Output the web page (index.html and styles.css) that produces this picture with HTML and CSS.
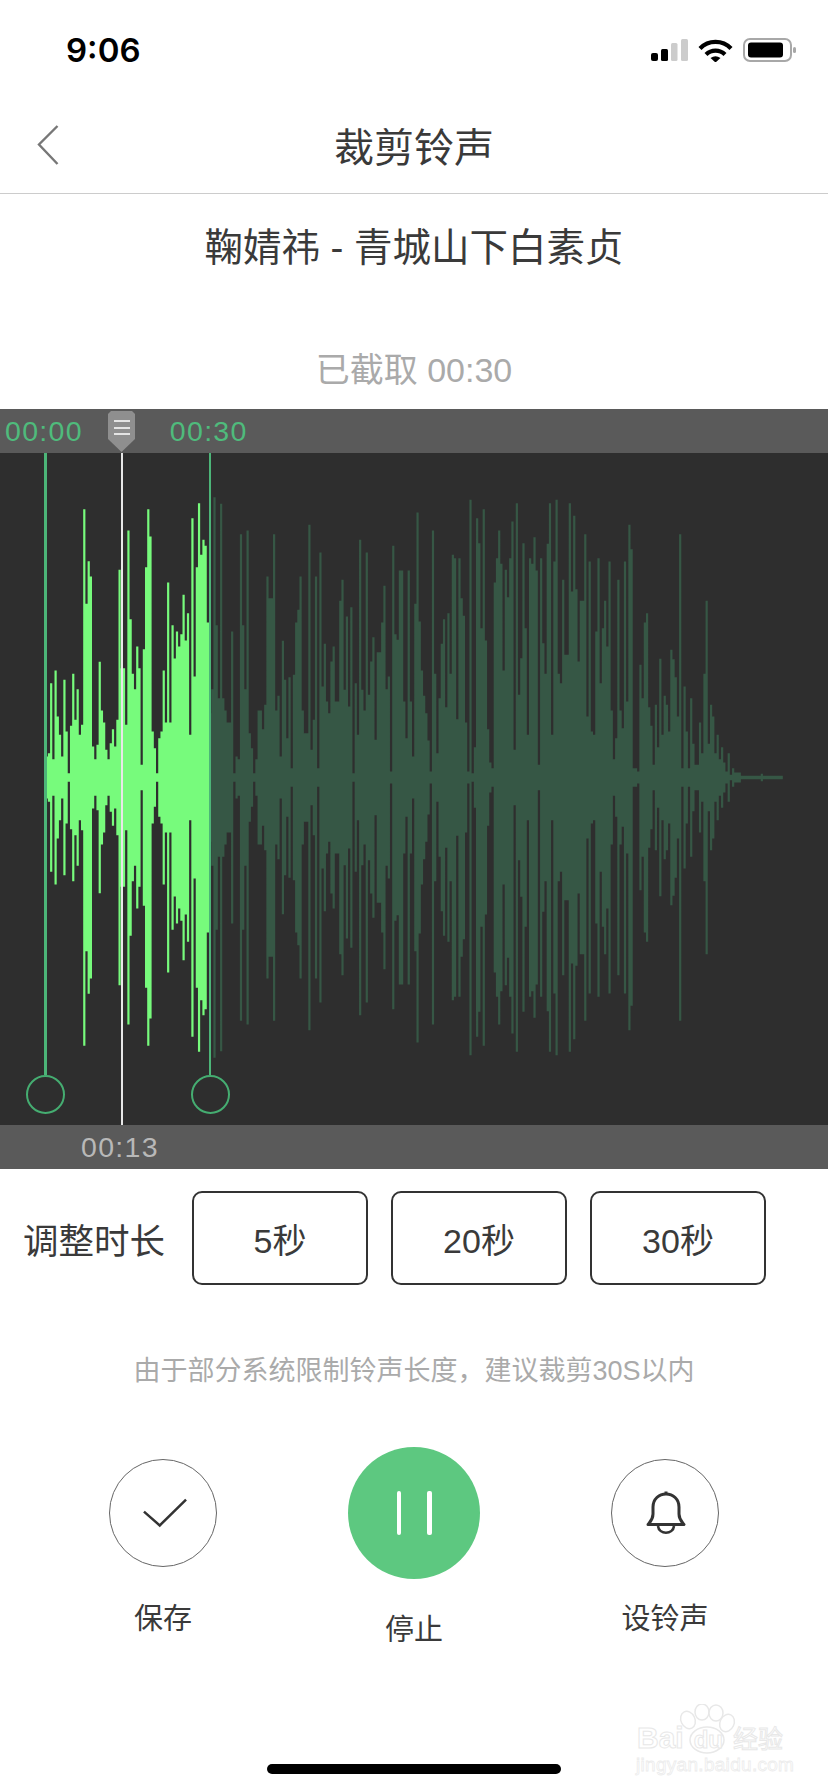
FILE: index.html
```html
<!DOCTYPE html>
<html lang="zh-CN">
<head>
    <meta charset="UTF-8">
    <meta name="viewport" content="width=device-width, initial-scale=1.0">
    <title>裁剪铃声</title>
    <link rel="stylesheet" href="styles.css">
</head>
<body>
    <div class="page">
        <div class="status-bar">
            <span class="status-time">9:06</span>
            <div class="status-icons">
                <svg width="37" height="23" viewBox="0 0 37 23">
                    <rect x="0" y="14" width="7" height="8" rx="2" fill="#000"/>
                    <rect x="10" y="10" width="7" height="12" rx="1.5" fill="#000"/>
                    <rect x="20" y="4" width="6.5" height="18" rx="1.5" fill="#ccc"/>
                    <rect x="30" y="0" width="7" height="22" rx="1.5" fill="#ccc"/>
                </svg>
                <svg width="35" height="23" viewBox="0 0 35 23" fill="none" stroke="#000">
                    <path d="M2 9.5A21.5 21.5 0 0 1 33 9.5" stroke-width="4.2"/>
                    <path d="M8 15.5A13.5 13.5 0 0 1 27 15.5" stroke-width="4.2"/>
                    <path d="M12.5 19Q17.5 15.5 22.5 19L17.5 23.5Z" fill="#000" stroke="none"/>
                </svg>
                <svg width="53" height="24" viewBox="0 0 53 24">
                    <rect x="1" y="1" width="47" height="22" rx="6" fill="none" stroke="#a8a8a8" stroke-width="2"/>
                    <rect x="5" y="4.5" width="35" height="15" rx="3" fill="#000"/>
                    <rect x="50" y="9" width="3" height="6" rx="1.5" fill="#a8a8a8"/>
                </svg>
            </div>
        </div>

        <header class="nav-bar">
            <svg class="back-icon" width="22" height="40" viewBox="0 0 22 40" fill="none" stroke="#777" stroke-width="2.4">
                <path d="M20.5 1L2 19.5L20.5 39"/>
            </svg>
            <h1 class="nav-title">裁剪铃声</h1>
        </header>

        <div class="song-title">鞠婧祎 - 青城山下白素贞</div>
        <div class="clip-length">已截取 00:30</div>

        <section class="wave-panel">
            <div class="time-strip top-strip">
                <span class="time-green">00:00</span>
                <span class="time-green">00:30</span>
                <div class="marker">
                    <span></span>
                    <span></span>
                    <span></span>
                </div>
            </div>
            <div class="wave-canvas">
                <svg class="wave-svg" width="828" height="672" viewBox="0 0 828 672">
                    <path id="wave-dim" fill="#365745"/>
                    <path id="wave-bright" fill="#77fb7c"/>
                </svg>
                <div class="handle handle-start"><div class="handle-knob"></div></div>
                <div class="handle handle-end"><div class="handle-knob"></div></div>
                <div class="playhead"></div>
            </div>
            <div class="time-strip bottom-strip">
                <span class="time-gray">00:13</span>
            </div>
        </section>

        <div class="duration-row">
            <span class="duration-label">调整时长</span>
            <button class="duration-btn">5秒</button>
            <button class="duration-btn">20秒</button>
            <button class="duration-btn">30秒</button>
        </div>

        <p class="hint">由于部分系统限制铃声长度，建议裁剪30S以内</p>

        <div class="controls">
            <div class="control side-control">
                <div class="circle-btn">
                    <svg class="check-icon" width="46" height="30" viewBox="0 0 46 30" fill="none" stroke="#333" stroke-width="2.6">
                        <path d="M1 13.5L17.5 28L45 1"/>
                    </svg>
                </div>
                <span class="control-label">保存</span>
            </div>
            <div class="control">
                <div class="play-btn">
                    <span></span>
                    <span></span>
                </div>
                <span class="control-label">停止</span>
            </div>
            <div class="control side-control">
                <div class="circle-btn">
                    <svg class="bell-icon" width="40" height="46" viewBox="0 0 40 46" fill="none" stroke="#333" stroke-width="3" stroke-linejoin="round">
                        <path d="M20 1.5V4"/>
                        <path d="M2 34.5C3 33 7 30 7 24V17C7 9 13 4 20 4S33 9 33 17V24C33 30 37 33 38 34.5Z"/>
                        <path d="M12 36C13 45 27 45 28 36" stroke-width="2.6"/>
                    </svg>
                </div>
                <span class="control-label">设铃声</span>
            </div>
        </div>

        <div class="home-indicator"></div>

        <div class="watermark">
            <svg class="watermark-paw" width="80" height="60" viewBox="0 0 80 60" fill="#fff" stroke="#e8e8e8" stroke-width="1.5">
                <ellipse cx="19" cy="16" rx="7" ry="9" transform="rotate(-25 19 16)"/>
                <ellipse cx="33" cy="8" rx="7" ry="8"/>
                <ellipse cx="47" cy="9" rx="7" ry="8"/>
                <ellipse cx="58" cy="19" rx="7" ry="9" transform="rotate(25 58 19)"/>
                <ellipse cx="38" cy="36" rx="17" ry="13"/>
            </svg>
            <div class="watermark-main">
                <span class="wm-bai">Bai</span>
                <span class="wm-du">du</span>
                <span class="wm-cn">经验</span>
            </div>
            <div class="watermark-url">jingyan.baidu.com</div>
        </div>
    </div>

    <script src="waveform.js"></script>
</body>
</html>
```

FILE: styles.css
```css
* {
    box-sizing: border-box;
}

body {
    margin: 0;
    background-color: #fff;
    color: #3a3a3a;
    font-family: "Liberation Sans", "Noto Sans CJK SC", sans-serif;
}

.page {
    position: relative;
    width: 828px;
    height: 1792px;
    overflow: hidden;
}

/* status bar */
.status-bar {
    display: flex;
    justify-content: space-between;
    align-items: center;
    height: 100px;
    padding: 0 32px 0 66px;
}

.status-time {
    font-family: Inter, "Liberation Sans", sans-serif;
    font-size: 33px;
    font-weight: 600;
    color: #000;
}

.status-icons {
    display: flex;
    align-items: center;
    gap: 10px;
}

/* nav */
.nav-bar {
    position: relative;
    display: flex;
    justify-content: center;
    align-items: center;
    height: 94px;
    border-bottom: 1px solid #ccc;
}

.back-icon {
    position: absolute;
    left: 37px;
    top: 25px;
}

.nav-title {
    margin: 0 0 4px;
    font-size: 40px;
    font-weight: 400;
}

.song-title {
    height: 108px;
    line-height: 108px;
    text-align: center;
    font-size: 38.5px;
}

.clip-length {
    height: 46px;
    margin: 45px 0 16px;
    line-height: 46px;
    text-align: center;
    font-size: 34px;
    color: #aaa;
}

/* waveform */
.wave-panel {
    display: flex;
    flex-direction: column;
}

.time-strip {
    position: relative;
    display: flex;
    align-items: center;
    height: 44px;
    background-color: #5a5a5a;
    font-size: 28.5px;
    letter-spacing: 1.3px;
}

.top-strip {
    gap: 87px;
    padding-left: 5px;
}

.bottom-strip {
    padding-left: 81px;
}

.time-green {
    color: #4fbb7c;
}

.time-gray {
    color: #b8b8b8;
}

.marker {
    position: absolute;
    left: 108px;
    top: 2px;
    display: flex;
    flex-direction: column;
    align-items: center;
    gap: 4.5px;
    width: 27px;
    height: 41px;
    padding-top: 9px;
    background-color: #8f8f8f;
    clip-path: polygon(3px 0, 24px 0, 27px 3px, 27px 28px, 13.5px 41px, 0 28px, 0 3px);
}

.marker span {
    width: 16px;
    height: 2px;
    background-color: #e4e4e4;
}

.wave-canvas {
    position: relative;
    height: 672px;
    background-color: #2e2e2e;
}

.wave-svg {
    display: block;
}

.handle {
    position: absolute;
    top: 0;
    height: 622px;
    background-color: #4cb578;
}

.handle-start {
    left: 44px;
    width: 3px;
}

.handle-end {
    left: 209px;
    width: 2px;
}

.handle-knob {
    position: absolute;
    top: 622px;
    width: 39px;
    height: 39px;
    border: 2px solid #45ad71;
    border-radius: 50%;
}

.handle-start .handle-knob {
    left: -18px;
}

.handle-end .handle-knob {
    left: -18.5px;
}

.playhead {
    position: absolute;
    left: 121px;
    top: 0;
    bottom: 0;
    width: 2px;
    background-color: #e8e8e8;
}

/* duration */
.duration-row {
    display: flex;
    align-items: center;
    gap: 23px;
    height: 94px;
    margin-top: 22px;
    padding-left: 23px;
}

.duration-label {
    width: 146px;
    font-size: 35.5px;
    white-space: nowrap;
}

.duration-btn {
    width: 176px;
    height: 94px;
    padding: 0;
    border: 2px solid #333;
    border-radius: 10px;
    background: #fff;
    color: #3a3a3a;
    font-family: inherit;
    font-size: 34px;
}

.hint {
    height: 40px;
    margin: 66px 0 0;
    line-height: 40px;
    text-align: center;
    font-size: 27px;
    color: #aaa;
}

/* controls */
.controls {
    display: grid;
    grid-template-columns: repeat(3, 251px);
    height: 204px;
    margin-top: 56px;
    padding: 0 37.5px;
}

.control {
    display: flex;
    flex-direction: column;
    align-items: center;
}

.side-control {
    padding-top: 12px;
}

.side-control .control-label {
    margin-top: 32px;
}

.circle-btn {
    display: flex;
    justify-content: center;
    align-items: center;
    width: 108px;
    height: 108px;
    border: 1.5px solid #666;
    border-radius: 50%;
}

.check-icon {
    margin: 0 0 0 3px;
    width: 44px;
}

.bell-icon {
    margin-left: 2px;
}

.play-btn {
    display: flex;
    justify-content: center;
    align-items: center;
    gap: 26px;
    width: 132px;
    height: 132px;
    border-radius: 50%;
    background-color: #5dc880;
}

.play-btn span {
    width: 4.5px;
    height: 44px;
    border-radius: 2px;
    background-color: #fff;
}

.control-label {
    height: 40px;
    margin-top: 31px;
    line-height: 40px;
    font-size: 29px;
}

.home-indicator {
    width: 294px;
    height: 10px;
    margin: 113px auto 0;
    border-radius: 5px;
    background-color: #000;
}

/* baidu watermark */
.watermark {
    position: absolute;
    left: 636px;
    top: 1704px;
    width: 150px;
    height: 72px;
    color: #fff;
}

.watermark-paw {
    position: absolute;
    left: 33px;
    top: 0;
}

.watermark-main {
    position: absolute;
    left: 1px;
    top: 20px;
    display: flex;
    align-items: baseline;
    height: 28px;
    line-height: 28px;
    font-weight: 700;
    -webkit-text-stroke: 1px #e8e8e8;
}

.wm-bai {
    font-size: 30px;
}

.wm-du {
    margin-left: 10px;
    font-size: 24px;
}

.wm-cn {
    margin-left: 10px;
    font-size: 25px;
    font-weight: 400;
}

.watermark-url {
    position: absolute;
    left: 0;
    top: 50px;
    width: 150px;
    line-height: 22px;
    font-size: 19px;
    letter-spacing: 0.3px;
    -webkit-text-stroke: 0.8px #ececec;
}
```

FILE: waveform.js
```js
// Top edge of each column, read off the screenshot at 3x. The wave is mirrored around the centre line.
const peaks = [
    1070, 1060, 850, 1078, 812, 950, 1005, 1070, 840, 995, 1120, 978, 822, 960, 868, 1005, 975, 328, 612, 484,
    530, 1040, 1078, 1035, 786, 932, 968, 1050, 1078, 1030, 988, 1040, 960, 510, 805, 805, 975, 392, 658, 822,
    868, 740, 805, 1095, 748, 502, 328, 410, 995, 1045, 1120, 1015, 995, 812, 968, 548, 968, 676, 776, 695,
    740, 703, 585, 722, 640, 1005, 355, 830, 502, 310, 465, 420, 438, 668,
    940, 868, 292, 676, 895, 312, 895, 932, 968, 968, 695, 1120, 1070, 1078, 403, 676, 868, 392, 1000, 1045,
    1120, 1078, 932, 932, 988, 915, 530, 595, 595, 403, 932, 888, 1070, 723, 840, 1015, 832, 1105, 825, 668,
    630, 530, 932, 1000, 1000, 375, 1050, 960, 530, 1105, 458, 860, 732, 905, 940, 785, 740, 905, 905, 603,
    540, 870, 650, 920, 622, 1120, 850, 1005, 420, 870, 932, 458, 885, 785, 712, 1020, 757, 757, 668, 558,
    868, 830, 1115, 438, 703, 720, 512, 512, 905, 1015, 512, 905, 1070,
    612, 338, 665, 812, 888, 940, 1022, 1115, 392, 822, 1060, 895, 732, 658, 922, 640, 822, 465, 475, 958,
    475, 595, 648, 968, 1115, 300, 1120, 1042, 355, 430, 685, 328, 722, 988, 1088, 1105, 548, 475, 392, 492,
    812, 510, 592, 475, 365, 1050, 310, 885, 775, 430, 685, 1005, 475, 492, 412, 512, 1095, 475, 730, 822,
    432, 310, 1005, 485, 300, 822, 850, 540, 765, 765, 310, 575, 348, 568, 785, 603, 603, 403, 950, 485,
    995, 1005, 695, 475, 850, 685, 603, 740, 485, 932, 1078, 1015, 540, 932, 985, 485, 905, 375, 448, 1105,
    1105, 1115, 795, 895, 668, 640, 922, 978, 1095, 915, 1042, 777, 1005, 888, 915, 995, 750, 778, 832, 950,
    403, 1105, 860, 995, 1105, 895, 1032, 1095, 1095, 968, 1060, 822, 603, 1032, 915, 950, 1060, 1005, 1078, 1042,
    1088, 1115, 1060, 1125, 1105, 1118, 1118, 1118,
    1128, 1128, 1128, 1128, 1128, 1128, 1128, 1128, 1128, 1122, 1128, 1128, 1128, 1128, 1128, 1128, 1128, 1128, 1128
];

const startX = 45.67;
const colWidth = 2.207;
const splitX = 209;
const centerY = 324.5;

function columnPath(x, amp) {
    return `M${x.toFixed(2)} ${(centerY - amp).toFixed(2)}h${colWidth}v${(amp * 2).toFixed(2)}h-${colWidth}z`;
}

let bright = '';
let dim = '';

peaks.forEach((top, i) => {
    const x = startX + i * colWidth;
    const amp = (1133 - top) / 3;
    if (x < splitX - 1) {
        bright += columnPath(x, amp);
    } else {
        dim += columnPath(x, amp);
    }
});

document.getElementById('wave-bright').setAttribute('d', bright);
document.getElementById('wave-dim').setAttribute('d', dim);
```
